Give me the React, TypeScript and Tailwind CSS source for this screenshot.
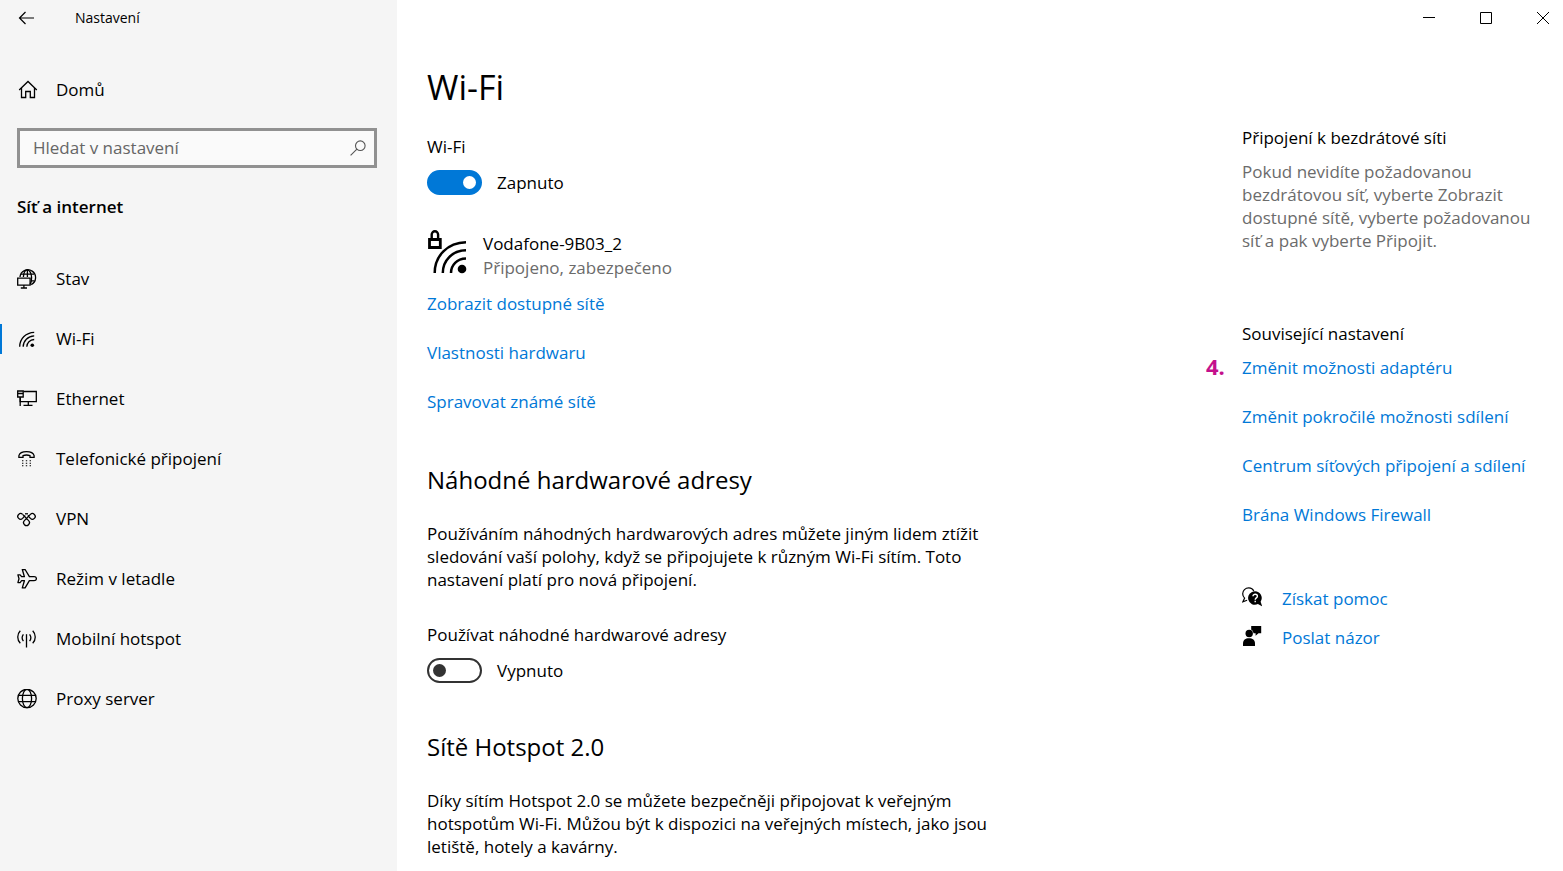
import React, { useState } from 'react';

interface NavItem {
  label: string;
  icon: React.ReactNode;
}

interface ToggleProps {
  id: string;
  label: string;
  checked: boolean;
  onChange: (checked: boolean) => void;
}

// Shared wrapper for the outlined 20px icons
const Icon: React.FC<{ children: React.ReactNode }> = ({ children }) => (
  <svg
    viewBox="0 0 20 20"
    className="h-5 w-5 shrink-0"
    fill="none"
    stroke="currentColor"
    strokeWidth="1.3"
    aria-hidden="true"
  >
    {children}
  </svg>
);

const HomeIcon = () => (
  <Icon>
    <path d="M1.2 10 10 1.500l8.800 8.500" />
    <path d="M3.500 8v9.500h4.200v-6h4.600v6h4.200V8" />
  </Icon>
);

const StatusIcon = () => (
  <Icon>
    <path d="M3 8A7.8 7.8 0 1 1 14.2 15.600" />
    <path d="M6.400 8C6.700 3.700 8.400.9 10.400.9s4.200 3.400 4.200 7.700c0 3-.5 5.300-1.500 6.800" />
    <path d="M10.400.9V8M4 5.100h13M14 11.900h3.400" />
    <path d="M.7 9.200h12.400v7H.7zM6.900 16.200v2.600M3.800 19h6.200" />
  </Icon>
);

const WifiIcon = () => (
  <Icon>
    <path d="M2.700 17.800C2.700 9.500 9.100 3.600 17.200 3.300" />
    <path d="M6.200 17.800c0-6.100 4.700-10.600 11-10.900" />
    <path d="M9.800 17.800c0-4.100 3.200-7.100 7.400-7.300" />
    <circle cx="15.300" cy="16.200" r="1.800" fill="currentColor" stroke="none" />
  </Icon>
);

const EthernetIcon = () => (
  <Icon>
    <path d="M6.500 2.500h12.800v10.200H3.200V8.600" />
    <path d="M.7 2h5.500v6H.7zM.7 4.500h5.500M3.200 8v9M11.300 12.700v3.600M6.500 16.400h9" />
  </Icon>
);

const DialupIcon = () => (
  <Icon>
    <path d="M1.900 8.400V6.700C2.600 4 5.600 2.700 9.500 2.700s6.900 1.300 7.600 4v1.700H13V6.600C11 5.900 8 5.900 6 6.600v1.800z" />
    <path
      d="M5 11.700h1.400M8.800 11.700h1.400M12.600 11.700H14M5 14.200h1.400M8.800 14.200h1.400M12.600 14.200H14M5 16.700h1.400M8.800 16.700h1.400M12.600 16.700H14"
      strokeWidth="1.100"
    />
  </Icon>
);

const VpnIcon = () => (
  <Icon>
    <path d="M5.600 5.400A2.800 2.800 0 1 0 5.600 9.400L8.200 6.500" />
    <path d="M5.600 5.400 11.600 11.600A2.900 2.900 0 1 1 7.400 11.600L13.400 5.400A2.800 2.800 0 1 1 13.400 9.400L10.800 6.500" />
    <path d="M8 4.800h3" />
  </Icon>
);

const AirplaneIcon = () => (
  <Icon>
    <path
      d="M5.300.5h2.800l4.300 7.200h4.700c1.500 0 2.300.9 2.300 2s-.8 2-2.300 2h-4.700l-4.300 7.200H5.300l2.100-7.200H4.600l-1.500 1.900H.9L2 9.700.9 5.800h2.200l1.500 1.900h2.800z"
      strokeLinejoin="round"
    />
  </Icon>
);

const HotspotIcon = () => (
  <Icon>
    <path d="M9.500 5.200V18.500" />
    <path d="M6.400 5.300c-1.500 2-1.500 4.800 0 6.800M12.600 5.300c1.500 2 1.500 4.800 0 6.800" />
    <path d="M3.300 1.700C-.1 5.200-.1 10.700 3.300 14.200M15.700 1.700c3.400 3.500 3.400 9 0 12.500" />
  </Icon>
);

const ProxyIcon = () => (
  <Icon>
    <circle cx="10" cy="9.500" r="9.200" />
    <ellipse cx="10" cy="9.500" rx="4.600" ry="9.200" />
    <path d="M1.600 6.300h16.800M1.600 12.700h16.800" />
  </Icon>
);

const SecuredWifiIcon = () => (
  <svg viewBox="0 0 40 44" className="h-11 w-10 shrink-0" fill="none" stroke="currentColor" aria-hidden="true">
    <path d="M2.500 9.500h10.800v8H2.500z" strokeWidth="2.800" />
    <path d="M4.700 9V4.500a3.200 3.200 0 0 1 6.400 0V9" strokeWidth="2.400" />
    <g strokeWidth="2.500">
      <path d="M7.700 43C7.700 26 20.500 12.500 39 12.200" />
      <path d="M15.800 43c0-12.500 9.400-22.500 23.200-22.700" />
      <path d="M24 43c0-8 6-14.300 15-14.500" />
    </g>
    <circle cx="35" cy="39" r="4.300" fill="currentColor" stroke="none" />
  </svg>
);

const HelpIcon = () => (
  <svg viewBox="0 0 20 20" className="h-5 w-5 shrink-0" fill="none" aria-hidden="true">
    <path
      d="M11.800 4.200C10.900 2 9 .9 6.800.9 3.300.9.700 3.400.7 6.700c0 1.900.7 3.300 1.900 4.400L.9 14.800l4.200-1.600"
      stroke="currentColor"
      strokeWidth="1.200"
    />
    <path d="M13 4.200a6.800 6.800 0 1 0 2.900 12.900l4.300 2.300-1.600-4.700A6.800 6.800 0 0 0 13 4.200z" fill="currentColor" />
    <path d="M11 9.200c0-2.600 4.400-2.500 4.400 0 0 1.700-2.200 1.700-2.200 3.500M13.200 13.800v1.500" stroke="#fff" strokeWidth="1.400" />
  </svg>
);

const FeedbackIcon = () => (
  <svg viewBox="0 0 20 20" className="h-5 w-5 shrink-0" fill="currentColor" aria-hidden="true">
    <path d="M9.200 0h10v7.200h-2.700l-2.900 2.600V7.200H9.200z" />
    <circle cx="7.200" cy="7.500" r="4.300" fill="#fff" />
    <circle cx="7.200" cy="7.500" r="3.700" />
    <path d="M1 20v-2.500C1 14 3.500 12.200 7 12.200s6 1.800 6 5.300V20z" />
  </svg>
);

const navItems: NavItem[] = [
  { label: 'Stav', icon: <StatusIcon /> },
  { label: 'Wi-Fi', icon: <WifiIcon /> },
  { label: 'Ethernet', icon: <EthernetIcon /> },
  { label: 'Telefonické připojení', icon: <DialupIcon /> },
  { label: 'VPN', icon: <VpnIcon /> },
  { label: 'Režim v letadle', icon: <AirplaneIcon /> },
  { label: 'Mobilní hotspot', icon: <HotspotIcon /> },
  { label: 'Proxy server', icon: <ProxyIcon /> },
];

const networkLinks = ['Zobrazit dostupné sítě', 'Vlastnosti hardwaru', 'Spravovat známé sítě'];

const relatedLinks = [
  { label: 'Změnit možnosti adaptéru', step: '4.' },
  { label: 'Změnit pokročilé možnosti sdílení' },
  { label: 'Centrum síťových připojení a sdílení' },
  { label: 'Brána Windows Firewall' },
];

const Toggle: React.FC<ToggleProps> = ({ id, label, checked, onChange }) => (
  <div>
    <label htmlFor={id} className="block">{label}</label>
    <div className="mt-[11px] flex h-[26px] gap-[15px]">
      <input
        id={id}
        type="checkbox"
        role="switch"
        checked={checked}
        onChange={(e) => onChange(e.target.checked)}
        className="flex h-[25px] w-[55px] shrink-0 appearance-none items-center rounded-full border-2 border-[#333] px-1 before:h-[13px] before:w-[13px] before:rounded-full before:bg-[#333] checked:justify-end checked:border-[#0078d7] checked:bg-[#0078d7] checked:before:bg-white"
      />
      <span className="leading-[26px]">{checked ? 'Zapnuto' : 'Vypnuto'}</span>
    </div>
  </div>
);

const Sidebar: React.FC = () => {
  const [active, setActive] = useState('Wi-Fi');

  return (
    <aside className="w-[397px] shrink-0 bg-[#f5f5f5]">
      <div className="flex h-9 items-center gap-10 pl-[18px] text-sm">
        <button type="button" aria-label="Zpět">
          <svg viewBox="0 0 17 14" className="h-3.5 w-[17px]" fill="none" stroke="currentColor" strokeWidth="1.2">
            <path d="M16 7H1.500M7.500 1l-6 6 6 6" />
          </svg>
        </button>
        <span>Nastavení</span>
      </div>

      <a href="#home" className="mt-6 flex h-[60px] items-center gap-[18px] pl-[18px]">
        <HomeIcon />
        Domů
      </a>

      <div className="ml-[17px] mr-5 mt-2 flex h-10 items-center border-3 border-[#919191] bg-[#fafafa] pr-2">
        <input
          type="text"
          aria-label="Hledat v nastavení"
          placeholder="Hledat v nastavení"
          className="min-w-0 flex-1 bg-transparent pl-[13px] outline-none placeholder:text-[#666]"
        />
        <svg viewBox="0 0 16 16" className="h-4 w-4 shrink-0" fill="none" stroke="#555" strokeWidth="1.100" aria-hidden="true">
          <circle cx="10.300" cy="5.700" r="4.800" />
          <path d="M6.900 9.100.6 15.400" />
        </svg>
      </div>

      <h2 className="mt-[27px] pl-[17px] font-semibold">Síť a internet</h2>

      <nav className="mt-[30px]">
        {navItems.map(({ label, icon }) => (
          <button
            key={label}
            type="button"
            onClick={() => setActive(label)}
            className="flex h-[60px] w-full items-center text-left"
          >
            <span className={`h-[30px] w-0.5 ${label === active ? 'bg-[#0078d7]' : ''}`} />
            <span className="ml-[15px] mr-[19px]">{icon}</span>
            {label}
          </button>
        ))}
      </nav>
    </aside>
  );
};

const WindowControls: React.FC = () => (
  <div className="flex h-9 items-center justify-end gap-[45px] pr-3.5">
    <button type="button" aria-label="Minimalizovat">
      <svg viewBox="0 0 12 12" className="h-3 w-3" stroke="currentColor">
        <path d="M0 5.500h12" />
      </svg>
    </button>
    <button type="button" aria-label="Maximalizovat">
      <svg viewBox="0 0 12 12" className="h-3 w-3" fill="none" stroke="currentColor">
        <path d="M.5.5h11v11H.5z" />
      </svg>
    </button>
    <button type="button" aria-label="Zavřít">
      <svg viewBox="0 0 12 12" className="h-3 w-3" stroke="currentColor">
        <path d="m0 0 12 12M12 0 0 12" />
      </svg>
    </button>
  </div>
);

const App: React.FC = () => {
  const [wifiOn, setWifiOn] = useState(true);
  const [randomAddresses, setRandomAddresses] = useState(false);

  return (
    <div className="flex min-h-screen bg-white font-['Open_Sans',sans-serif] text-[17px] leading-6 text-black">
      <Sidebar />

      <div className="min-w-0 flex-1">
        <WindowControls />

        <div className="flex justify-between gap-10 pl-[30px]">
          <main className="max-w-[565px] flex-1">
            <h1 className="mt-[31px] text-[34px] leading-10">Wi-Fi</h1>

            <div className="mt-7">
              <Toggle id="wifi" label="Wi-Fi" checked={wifiOn} onChange={setWifiOn} />
            </div>

            <div className="mt-[34px] flex gap-4">
              <SecuredWifiIcon />
              <div className="pt-0.5">
                <div>Vodafone-9B03_2</div>
                <div className="text-[#6b6b6b]">Připojeno, zabezpečeno</div>
              </div>
            </div>

            <ul className="mt-3 space-y-[25px]">
              {networkLinks.map((link) => (
                <li key={link}>
                  <a href="#network" className="text-[#0078d7]">{link}</a>
                </li>
              ))}
            </ul>

            <h2 className="mt-[50px] text-2xl">Náhodné hardwarové adresy</h2>
            <p className="mt-[26px] leading-[23px]">
              Používáním náhodných hardwarových adres můžete jiným lidem ztížit sledování vaší polohy, když se
              připojujete k různým Wi-Fi sítím. Toto nastavení platí pro nová připojení.
            </p>
            <div className="mt-8">
              <Toggle
                id="random-addresses"
                label="Používat náhodné hardwarové adresy"
                checked={randomAddresses}
                onChange={setRandomAddresses}
              />
            </div>

            <h2 className="mt-[47px] text-2xl">Sítě Hotspot 2.0</h2>
            <p className="mt-[26px] leading-[23px]">
              Díky sítím Hotspot 2.0 se můžete bezpečněji připojovat k veřejným hotspotům Wi-Fi. Můžou být k
              dispozici na veřejných místech, jako jsou letiště, hotely a kavárny.
            </p>
          </main>

          <aside className="mt-[90px] w-[321px] shrink-0 pr-8">
            <h3>Připojení k bezdrátové síti</h3>
            <p className="mt-2.5 leading-[23px] text-[#6b6b6b]">
              Pokud nevidíte požadovanou bezdrátovou síť, vyberte Zobrazit dostupné sítě, vyberte požadovanou síť a
              pak vyberte Připojit.
            </p>

            <h3 className="mt-[70px]">Související nastavení</h3>
            <ul className="mt-2.5 space-y-[25px]">
              {relatedLinks.map(({ label, step }) => (
                <li key={label} className="relative whitespace-nowrap">
                  {step && (
                    <span className="absolute -left-9 text-[22px] leading-5 font-bold text-[#c4108c]">{step}</span>
                  )}
                  <a href="#related" className="text-[#0078d7]">{label}</a>
                </li>
              ))}
            </ul>

            <div className="mt-15 space-y-[15px] text-[#0078d7]">
              <a href="#help" className="flex h-6 items-start gap-5">
                <span className="text-black"><HelpIcon /></span>
                Získat pomoc
              </a>
              <a href="#feedback" className="flex h-6 items-start gap-5">
                <span className="text-black"><FeedbackIcon /></span>
                Poslat názor
              </a>
            </div>
          </aside>
        </div>
      </div>
    </div>
  );
};

export default App;
